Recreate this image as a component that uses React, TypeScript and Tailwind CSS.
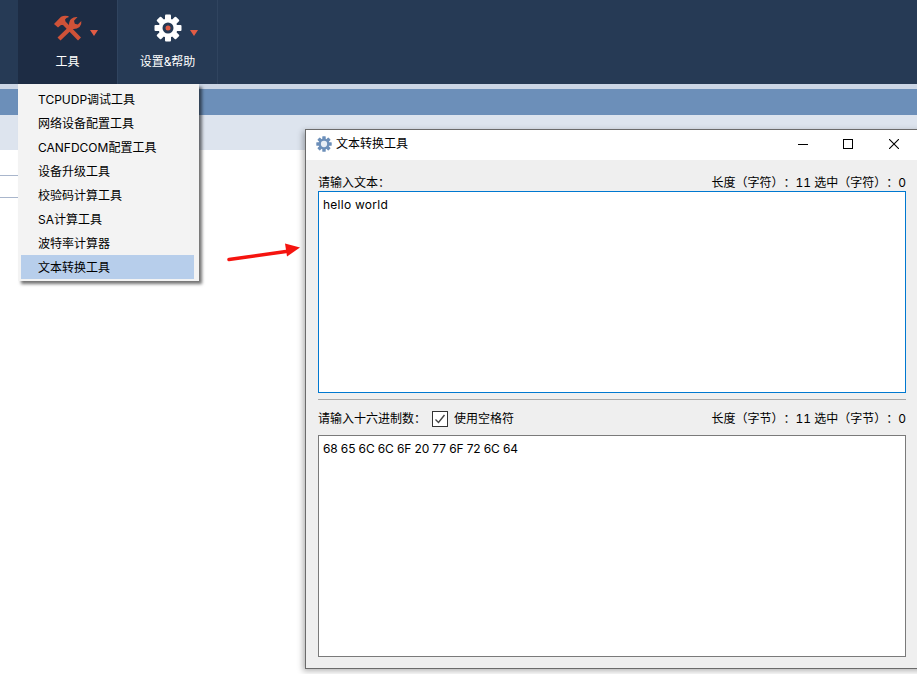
const FONT = 'font-["Inter","Noto_Sans_CJK_SC",sans-serif] [text-spacing-trim:space-all]';

const MENU_ITEMS = [
  'TCPUDP调试工具',
  '网络设备配置工具',
  'CANFDCOM配置工具',
  '设备升级工具',
  '校验码计算工具',
  'SA计算工具',
  '波特率计算器',
  '文本转换工具',
];

function Gear({ size, body, hole, dot }: { size: number; body: string; hole: string; dot?: string }) {
  const teeth = [0, 45, 90, 135, 180, 225, 270, 315];
  return (
    <svg width={size} height={size} viewBox="0 0 28 28">
      {teeth.map((a) => (
        <rect key={a} x="11" y="0.5" width="6" height="7" rx="1" fill={body} transform={`rotate(${a} 14 14)`} />
      ))}
      <circle cx="14" cy="14" r="9.5" fill={body} />
      <circle cx="14" cy="14" r="5.5" fill={hole} />
      {dot && <circle cx="14" cy="14" r="2.5" fill={dot} />}
    </svg>
  );
}

function ToolsIcon() {
  return (
    <svg width="28" height="26" viewBox="0 0 28 26" fill="#cf5238">
      {/* hammer */}
      <path d="M0 9 L7 1.8 Q10 0 14 1 L15 2 Q12 2.5 11 4.5 L11.5 6.5 L27 22.5 L24 25.5 L9 10 L7 10 L4 12.5 Z" />
      {/* wrench */}
      <path d="M3.5 22.5 L15 11.5 Q14.5 7 17 4 Q20 1.5 23.5 2 L20 5.8 L20.8 8.8 L23.8 9.6 L27.3 6 Q28 9.5 25.5 12 Q22.5 14.5 18.5 14 L6.5 25.5 Z" />
    </svg>
  );
}

function HeaderButton({ label, icon, active }: { label: string; icon: React.ReactNode; active?: boolean }) {
  return (
    <div
      className={`relative flex h-full w-[100px] flex-col items-center border-r border-[#30445f] pt-[14px] ${
        active ? 'bg-[#1d2c44]' : ''
      }`}
    >
      <div className="flex h-[28px] items-center">{icon}</div>
      <span className="absolute left-[72px] top-[30px] h-0 w-0 border-x-[4px] border-t-[6px] border-x-transparent border-t-[#e25c45]" />
      <span className="mt-[11px] text-[12px] leading-[18px] text-white">{label}</span>
    </div>
  );
}

function TextBox({ value, focused, className }: { value: string; focused?: boolean; className: string }) {
  return (
    <div
      className={`border bg-white px-1 pt-[4px] text-[12px] leading-[18px] text-black ${
        focused ? 'border-[#0078d0]' : 'border-[#7a7a7a]'
      } ${className}`}
    >
      {value}
    </div>
  );
}

export default function App() {
  return (
    <div className={`relative h-[674px] w-[917px] overflow-hidden bg-white ${FONT}`}>
      <header className="flex h-[84px] bg-[#263a55] pl-[18px]">
        <HeaderButton label="工具" active icon={<ToolsIcon />} />
        <HeaderButton label="设置&帮助" icon={<Gear size={28} body="#ffffff" hole="#263a55" dot="#e25c45" />} />
      </header>
      <div className="h-[5px] bg-[#cbd6e6]" />
      <div className="h-[26px] bg-[#6c8fb9]" />
      <div className="h-[35px] bg-[#dde4ee]" />
      <div className="mt-[25px] h-[23px] w-[18px] border-y border-[#a9b6cc]" />

      {/* tools dropdown */}
      <div className="absolute left-[18px] top-[84px] w-[181px] bg-[#f3f3f3] pb-[2px] pl-[3px] pr-[5px] pt-[3px] text-[12px] text-black shadow-[3px_3px_3px_rgba(0,0,0,0.55)]">
        {MENU_ITEMS.map((item, i) => (
          <div
            key={item}
            className={`flex h-[24px] items-center pl-[17px] pt-[1px] ${i === MENU_ITEMS.length - 1 ? 'bg-[#b7ceeb]' : ''}`}
          >
            {item}
          </div>
        ))}
      </div>

      {/* arrow */}
      <svg className="absolute left-[226px] top-[242px]" width="76" height="20" viewBox="0 0 76 20">
        <path d="M3 17.5 L60 9.5" stroke="#f5140f" strokeWidth="3.5" strokeLinecap="round" />
        <path d="M74 5.5 L59 1.5 L61 14.5 Z" fill="#f5140f" />
      </svg>

      {/* text convert window */}
      <div className="absolute left-[305px] top-[129px] flex h-[540px] w-[620px] flex-col border border-[#6b6b6b] bg-[#efefef] text-[12px] text-black shadow-[-2px_2px_6px_rgba(0,0,0,0.3)]">
        <div className="flex h-[30px] items-center bg-white pb-[2px] pl-[10px]">
          <Gear size={16} body="#6c8fb9" hole="#e8eef5" />
          <span className="ml-[4px] flex-1">文本转换工具</span>
          <span className="h-px w-[10px] bg-black" />
          <span className="ml-[35px] h-[10px] w-[10px] border border-black" />
          <svg className="ml-[36px] mr-[25px]" width="10" height="10" viewBox="0 0 10 10" stroke="#000000" strokeWidth="1.1">
            <path d="M0 0 L10 10 M10 0 L0 10" />
          </svg>
        </div>

        <div className="flex flex-1 flex-col pl-[12px] pr-[18px]">
          <div className="flex h-[31px] items-end justify-between leading-[18px]">
            <span className="translate-y-[1px]">请输入文本：</span>
            <span className="translate-y-[1px] tabular-nums">长度（字符）：11 选中（字符）：0</span>
          </div>
          <TextBox value="hello world" focused className="h-[202px] tracking-[0.25px]" />
          <div className="mt-[6px] h-px bg-[#a8a8a8]" />
          <div className="flex h-[35px] items-center justify-between pt-[2px]">
            <div className="flex items-center">
              <span>请输入十六进制数：</span>
              <span className="ml-[6px] flex h-[16px] w-[16px] items-center justify-center border border-[#333333] bg-white">
                <svg width="12" height="12" viewBox="0 0 12 12" fill="none" stroke="#444444" strokeWidth="1.4">
                  <path d="M1.5 6.5 L4.5 9.5 L10.5 2" />
                </svg>
              </span>
              <span className="ml-[6px]">使用空格符</span>
            </div>
            <span className="tabular-nums">长度（字节）：11 选中（字节）：0</span>
          </div>
          <TextBox value="68 65 6C 6C 6F 20 77 6F 72 6C 64" className="h-[222px] tracking-[-0.13px]" />
        </div>
      </div>
    </div>
  );
}
